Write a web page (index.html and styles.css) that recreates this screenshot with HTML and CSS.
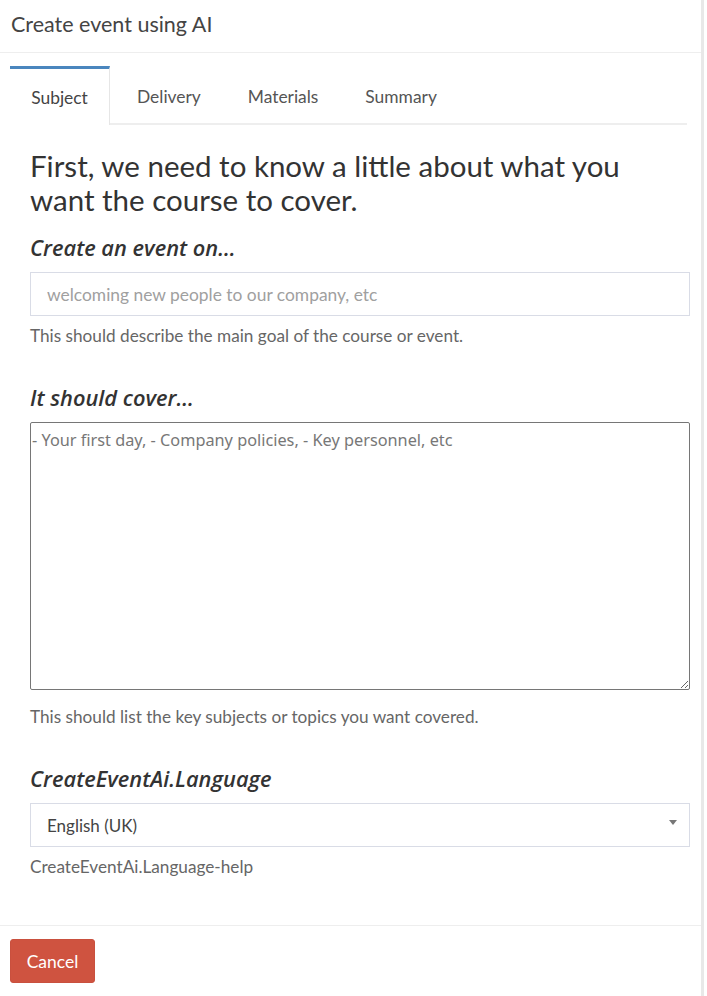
FILE: index.html
```html
<!DOCTYPE html>
<html lang="en">
<head>
<meta charset="utf-8">
<title>Create event using AI</title>
<link rel="stylesheet" href="styles.css">
</head>
<body>
<div class="modal">
  <header class="modal-header">
    <h1 class="modal-title">Create event using AI</h1>
  </header>
  <div class="modal-body">
    <nav class="tabs">
      <a class="tab active">Subject</a>
      <a class="tab">Delivery</a>
      <a class="tab">Materials</a>
      <a class="tab">Summary</a>
    </nav>
    <div class="pane">
      <h2 class="lead">First, we need to know a little about what you want the course to cover.</h2>

      <div class="field">
        <label class="label">Create an event on...</label>
        <input class="control" type="text" placeholder="welcoming new people to our company, etc">
        <p class="help">This should describe the main goal of the course or event.</p>
      </div>

      <div class="field">
        <label class="label">It should cover...</label>
        <textarea class="area" placeholder="- Your first day, - Company policies, - Key personnel, etc"></textarea>
        <p class="help help-area">This should list the key subjects or topics you want covered.</p>
      </div>

      <div class="field">
        <label class="label">CreateEventAi.Language</label>
        <div class="select">
          <span>English (UK)</span>
          <span class="caret"></span>
        </div>
        <p class="help">CreateEventAi.Language-help</p>
      </div>
    </div>
  </div>
  <footer class="modal-footer">
    <button class="btn-cancel" type="button">Cancel</button>
  </footer>
</div>
</body>
</html>
```

FILE: styles.css
```css
* { box-sizing: border-box; }
html, body { margin: 0; padding: 0; background: #ffffff; }
body {
  font-family: Lato, "Liberation Sans", sans-serif;
  color: #333333;
  width: 707px;
  height: 996px;
  overflow: hidden;
}
.modal {
  width: 704px;
  height: 996px;
  border-right: 3px solid #e8e8e8;
  background: #fff;
  display: flex;
  flex-direction: column;
}
.modal-header {
  height: 53px;
  border-bottom: 1px solid #eeeeee;
  padding: 0 11px;
  display: flex;
  align-items: center;
}
.modal-title {
  margin: 0;
  font-size: 21.5px;
  font-weight: 400;
  color: #444;
  position: relative;
  top: -2px;
}
.modal-body {
  padding: 13px 14px 0 10px;
  flex: 1;
}
.tabs {
  display: flex;
  border-bottom: 2px solid #eeeeee;
  height: 59px;
}
.tab {
  display: flex;
  align-items: center;
  padding: 1px 0 0;
  font-size: 17.4px;
  color: #555;
  height: 59px;
}
.tab.active {
  width: 100px;
  justify-content: center;
  border-top: 3px solid #4a86be;
  border-right: 1px solid #e6e6e6;
  background: #fff;
  margin-bottom: -2px;
  height: 59px;
  color: #444;
}
.tab:nth-child(2) { margin-left: 27px; }
.tab:nth-child(3) { margin-left: 47px; }
.tab:nth-child(4) { margin-left: 47px; }
.pane {
  padding: 24px 0 0 20px;
}
.lead {
  margin: 0;
  font-size: 29.5px;
  font-weight: 400;
  line-height: 34px;
  color: #333;
}
.field { margin-top: 18px; }
.field + .field { margin-top: 39px; }
.label {
  display: block;
  font-family: "Open Sans", "Noto Sans", sans-serif;
  font-size: 21.8px;
  font-style: italic;
  font-weight: 600;
  color: #333;
  line-height: 26px;
  margin-bottom: 11px;
}
.control {
  display: block;
  width: 660px;
  height: 44px;
  border: 1px solid #d9dce6;
  padding: 0 16px;
  font-family: inherit;
  font-size: 17.4px;
  color: #333;
  outline: none;
}
.control::placeholder { color: #a0a0a0; }
.area {
  display: block;
  width: 660px;
  height: 268px;
  border: 1px solid #767676;
  border-radius: 2px;
  padding: 6px 1px;
  font-family: "Noto Sans", "Open Sans", sans-serif;
  font-size: 16.3px;
  resize: vertical;
  outline: none;
}
.area::placeholder { color: #777; }
.help {
  margin: 10px 0 0;
  font-size: 17.2px;
  color: #666;
  line-height: 20px;
}
.help-area { margin-top: 17px; }
.select {
  width: 660px;
  height: 44px;
  border: 1px solid #d9dce6;
  padding: 0 12px 0 16px;
  display: flex;
  align-items: center;
  justify-content: space-between;
  font-size: 17px;
  color: #444;
}
.caret {
  width: 0; height: 0;
  border-left: 4px solid transparent;
  border-right: 4px solid transparent;
  border-top: 5px solid #777;
  margin-top: -6px;
}
.modal-footer {
  border-top: 1px solid #eeeeee;
  height: 71px;
  padding: 13px 10px;
}
.btn-cancel {
  width: 85px;
  height: 44px;
  background: #cf5340;
  border: 1px solid #c9503e;
  border-radius: 3px;
  color: #fff;
  font-family: inherit;
  font-size: 17.5px;
  padding: 0;
}
```
